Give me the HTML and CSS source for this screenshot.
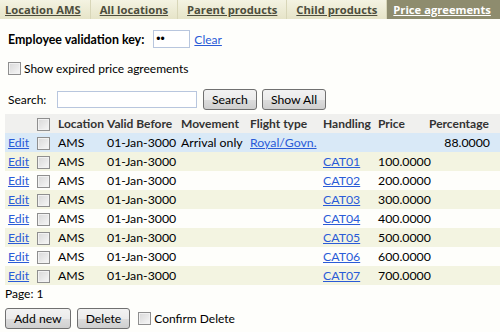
FILE: index.html
```html
<!DOCTYPE html>
<html lang="en">
<head>
  <meta charset="UTF-8">
  <title>Price agreements</title>
  <link rel="stylesheet" href="styles.css">
</head>
<body>
  <div class="tabs">
    <a class="tab first" href="#">Location AMS</a>
    <a class="tab" href="#">All locations</a>
    <a class="tab" href="#">Parent products</a>
    <a class="tab" href="#">Child products</a>
    <a class="tab active" href="#">Price agreements</a>
  </div>

  <div class="keyRow">
    <label class="keyLabel">Employee validation key:</label>
    <input type="password" class="keyInput" value="ab">
    <a href="#">Clear</a>
  </div>

  <div class="expiredRow">
    <input type="checkbox" class="check">
    <span>Show expired price agreements</span>
  </div>

  <div class="searchRow">
    <label class="searchLabel">Search:</label>
    <input type="text" class="searchInput">
    <button class="btn">Search</button>
    <button class="btn">Show All</button>
  </div>

  <table class="grid">
    <colgroup>
      <col class="cEdit"><col class="cCheck"><col class="cLoc"><col class="cValid"><col class="cMove">
      <col class="cFlight"><col class="cHand"><col class="cPrice"><col class="cPct">
    </colgroup>
    <thead>
      <tr>
        <th></th>
        <th><input type="checkbox" class="check"></th>
        <th>Location</th>
        <th>Valid Before</th>
        <th>Movement</th>
        <th>Flight type</th>
        <th>Handling</th>
        <th>Price</th>
        <th>Percentage</th>
      </tr>
    </thead>
    <tbody>
      <tr class="selected">
        <td><a href="#">Edit</a></td>
        <td><input type="checkbox" class="check"></td>
        <td>AMS</td>
        <td>01-Jan-3000</td>
        <td>Arrival only</td>
        <td><a href="#">Royal/Govn.</a></td>
        <td></td>
        <td></td>
        <td class="num">88.0000</td>
      </tr>
      <tr class="alt">
        <td><a href="#">Edit</a></td><td><input type="checkbox" class="check"></td><td>AMS</td><td>01-Jan-3000</td>
        <td></td><td></td><td><a href="#">CAT01</a></td><td>100.0000</td><td></td>
      </tr>
      <tr>
        <td><a href="#">Edit</a></td><td><input type="checkbox" class="check"></td><td>AMS</td><td>01-Jan-3000</td>
        <td></td><td></td><td><a href="#">CAT02</a></td><td>200.0000</td><td></td>
      </tr>
      <tr class="alt">
        <td><a href="#">Edit</a></td><td><input type="checkbox" class="check"></td><td>AMS</td><td>01-Jan-3000</td>
        <td></td><td></td><td><a href="#">CAT03</a></td><td>300.0000</td><td></td>
      </tr>
      <tr>
        <td><a href="#">Edit</a></td><td><input type="checkbox" class="check"></td><td>AMS</td><td>01-Jan-3000</td>
        <td></td><td></td><td><a href="#">CAT04</a></td><td>400.0000</td><td></td>
      </tr>
      <tr class="alt">
        <td><a href="#">Edit</a></td><td><input type="checkbox" class="check"></td><td>AMS</td><td>01-Jan-3000</td>
        <td></td><td></td><td><a href="#">CAT05</a></td><td>500.0000</td><td></td>
      </tr>
      <tr>
        <td><a href="#">Edit</a></td><td><input type="checkbox" class="check"></td><td>AMS</td><td>01-Jan-3000</td>
        <td></td><td></td><td><a href="#">CAT06</a></td><td>600.0000</td><td></td>
      </tr>
      <tr class="alt">
        <td><a href="#">Edit</a></td><td><input type="checkbox" class="check"></td><td>AMS</td><td>01-Jan-3000</td>
        <td></td><td></td><td><a href="#">CAT07</a></td><td>700.0000</td><td></td>
      </tr>
    </tbody>
  </table>

  <div class="pager">Page: 1</div>

  <div class="actions">
    <button class="btn">Add new</button>
    <button class="btn">Delete</button>
    <input type="checkbox" class="check">
    <span>Confirm Delete</span>
  </div>
</body>
</html>
```

FILE: styles.css
```css
body {
  margin: 0;
  font-family: Lato, "Open Sans", sans-serif;
  font-size: 12px;
  color: #000;
  background-color: #fefefb;
  overflow: hidden;
}

a {
  color: #2a5bd7;
}

.tabs {
  display: flex;
  height: 19px;
  background: linear-gradient(#f4f3e2, #e6e4c8);
}

.tab {
  padding: 0 9px;
  border-right: 1px solid #d8d6b8;
  font-family: "Open Sans", sans-serif;
  font-weight: bold;
  font-size: 11.2px;
  line-height: 19px;
  color: #4d4d3c;
  white-space: nowrap;
}

.tab.first {
  padding-left: 5px;
}

.tab.active {
  flex: 1;
  padding-left: 6px;
  background-color: #8e8c6e;
  color: #fff;
  border-right: none;
}

.keyRow {
  display: flex;
  align-items: center;
  padding: 10px 8px 0;
  height: 20px;
}

.keyLabel {
  font-weight: bold;
  font-size: 12.4px;
  margin-right: 9px;
}

.keyInput {
  width: 31px;
  height: 14px;
  padding: 1px 2px;
  margin: 0 4px 0 0;
  border: 1px solid #b8c6de;
  font-size: 12px;
  background: #fff;
}

.expiredRow {
  display: flex;
  align-items: center;
  padding: 12px 8px 0;
  height: 15px;
}

.check {
  appearance: none;
  width: 13px;
  height: 13px;
  margin: 0 3px 0 0;
  border: 1px solid #8f8f8f;
  background: linear-gradient(135deg, #d8d8d8, #f7f7f7);
  box-shadow: inset 0 0 0 1px #f2f2f2;
  vertical-align: middle;
}

.searchRow {
  display: flex;
  align-items: center;
  padding: 12px 0 0 8px;
  height: 22px;
}

.searchLabel {
  width: 49px;
}

.searchInput {
  width: 134px;
  height: 15px;
  padding: 0 2px;
  margin: 0 6px 0 0;
  border: 1px solid #b8c6de;
  background: #fff;
}

.btn {
  height: 21px;
  padding: 0 8px;
  margin: 0 5px 0 0;
  font-family: inherit;
  font-size: 12.2px;
  color: #000;
  border: 1px solid #707070;
  border-radius: 3px;
  background: linear-gradient(#f2f2f2 0%, #ebebeb 50%, #dddddd 51%, #cfcfcf 100%);
}

.grid {
  margin: 4px 0 0 5px;
  border-collapse: collapse;
  table-layout: fixed;
  width: 495px;
}

.cEdit { width: 28px; }
.cCheck { width: 22px; }
.cLoc { width: 49px; }
.cValid { width: 74px; }
.cMove { width: 69px; }
.cFlight { width: 73px; }
.cHand { width: 55px; }
.cPrice { width: 51px; }
.cPct { width: 74px; }

.grid th, .grid td {
  height: 19px;
  padding: 0 0 0 3px;
  text-align: left;
  white-space: nowrap;
  font-size: 12.3px;
}

.grid th {
  background-color: #f0f0ee;
  color: #333;
  font-size: 12px;
}

.grid td .check, .grid th .check {
  margin-left: 1px;
}

.grid td.num {
  text-align: right;
  padding-right: 10px;
}

.grid tr.selected td {
  background-color: #d9e9f7;
}

.grid tr.alt td {
  background-color: #f3f4e1;
}

.pager {
  padding: 1px 8px 0 5px;
}

.actions {
  display: flex;
  align-items: center;
  padding: 7px 0 0 5px;
}

.actions .btn {
  margin-right: 6px;
}

.actions .check {
  margin-left: 2px;
}
```
